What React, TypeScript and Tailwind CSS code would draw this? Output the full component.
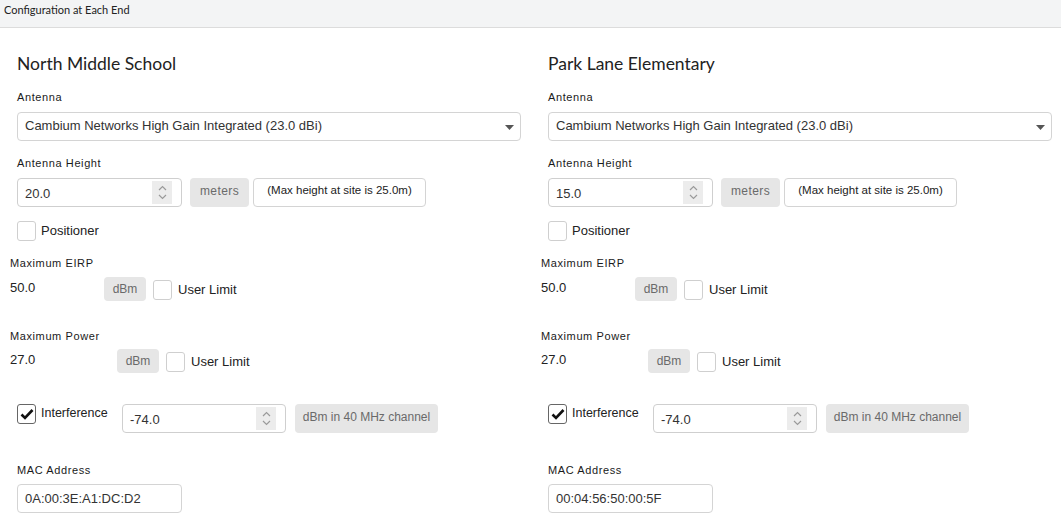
import React from "react";

const sans = { fontFamily: '"Liberation Sans", Arial, sans-serif' };
const lato = { fontFamily: 'Lato, "Liberation Sans", sans-serif' };

function Spinner() {
  return (
    <div className="absolute right-[9px] top-[2px] w-[20px] h-[23px] bg-[#ececec] flex flex-col items-center justify-center gap-[3px]">
      <svg width="9" height="6" viewBox="0 0 9 6">
        <path d="M1 5 L4.5 1.5 L8 5" fill="none" stroke="#9a9a9a" strokeWidth="1.2" />
      </svg>
      <svg width="9" height="6" viewBox="0 0 9 6">
        <path d="M1 1 L4.5 4.5 L8 1" fill="none" stroke="#9a9a9a" strokeWidth="1.2" />
      </svg>
    </div>
  );
}

function NumInput({ value, w }: { value: string; w: string }) {
  return (
    <div className={`relative ${w} h-[29px] border border-[#cfcfcf] rounded-[4px] bg-white flex items-center pl-[7px] text-[13px] text-[#333]`}>
      <span className="mt-[2px]">{value}</span>
      <Spinner />
    </div>
  );
}

function Checkbox({ checked }: { checked?: boolean }) {
  return (
    <div
      className={`w-[19px] h-[20px] rounded-[3px] border bg-white flex items-center justify-center shrink-0 ${
        checked ? "border-[#666]" : "border-[#cfcfcf]"
      }`}
    >
      {checked && (
        <svg width="14" height="12" viewBox="0 0 14 12">
          <path d="M1.5 6.5 L5 10 L12.5 2" fill="none" stroke="#111" strokeWidth="2.6" strokeLinejoin="miter" />
        </svg>
      )}
    </div>
  );
}

function Label({ children, className = "" }: { children: React.ReactNode; className?: string }) {
  return (
    <div className={`text-[11px] leading-[14px] tracking-[0.6px] text-[#1a1a1a] ${className}`}>{children}</div>
  );
}

function Column({ title, height, mac }: { title: string; height: string; mac: string }) {
  return (
    <div className="flex flex-col pl-[10px]" style={sans}>
      <div className="ml-[7px] mt-[26px] text-[17.5px] leading-[20px] text-[#222]" style={lato}>
        {title}
      </div>
      <Label className="ml-[7px] mt-[16px]">Antenna</Label>
      <div className="ml-[7px] mt-[8px] w-[504px] h-[29px] border border-[#d4d4d4] rounded-[4px] flex items-center justify-between pl-[7px] pr-[6px] text-[13px] text-[#333]">
        <span className="mb-[2px]">Cambium Networks High Gain Integrated (23.0 dBi)</span>
        <svg width="9" height="5" viewBox="0 0 9 5" className="mt-[2px]">
          <path d="M0 0 L9 0 L4.5 5 Z" fill="#555" />
        </svg>
      </div>
      <Label className="ml-[7px] mt-[15px]">Antenna Height</Label>
      <div className="ml-[7px] mt-[8px] flex items-start">
        <NumInput value={height} w="w-[165px]" />
        <div className="ml-[8px] w-[59px] h-[29px] rounded-[4px] bg-[#e6e6e6] text-[12px] tracking-[0.4px] text-[#6a6a6a] text-center pt-[4px]">
          meters
        </div>
        <div className="ml-[4px] w-[173px] h-[29px] rounded-[4px] border border-[#d4d4d4] text-[11.5px] text-[#222] flex items-center justify-center pb-[3px]">
          (Max height at site is 25.0m)
        </div>
      </div>
      <div className="ml-[7px] mt-[14px] flex items-center h-[20px]">
        <Checkbox />
        <span className="ml-[5px] text-[13px] text-[#222]">Positioner</span>
      </div>
      <Label className="mt-[15px]">Maximum EIRP</Label>
      <div className="mt-[7px] flex items-center h-[24px]">
        <span className="w-[94px] text-[13px] text-[#222] mb-[2px]">50.0</span>
        <div className="w-[42px] h-[24px] rounded-[4px] bg-[#e6e6e6] text-[12px] text-[#6a6a6a] flex items-center justify-center">
          dBm
        </div>
        <div className="ml-[7px] mt-[2px]">
          <Checkbox />
        </div>
        <span className="ml-[6px] text-[13px] text-[#222] mt-[2px]">User Limit</span>
      </div>
      <Label className="mt-[28px]">Maximum Power</Label>
      <div className="mt-[6px] flex items-center h-[24px]">
        <span className="w-[107px] text-[13px] text-[#222] mb-[2px]">27.0</span>
        <div className="w-[42px] h-[24px] rounded-[4px] bg-[#e6e6e6] text-[12px] text-[#6a6a6a] flex items-center justify-center">
          dBm
        </div>
        <div className="ml-[7px] mt-[2px]">
          <Checkbox />
        </div>
        <span className="ml-[6px] text-[13px] text-[#222] mt-[2px]">User Limit</span>
      </div>
      <div className="ml-[7px] mt-[31px] flex items-start">
        <Checkbox checked />
        <span className="ml-[5px] text-[12.5px] leading-[18px] text-[#222] w-[81px]">Interference</span>
        <NumInput value="-74.0" w="w-[164px]" />
        <div className="ml-[9px] w-[143px] h-[29px] rounded-[4px] bg-[#e6e6e6] text-[12px] text-[#6a6a6a] text-center pt-[4px]">
          dBm in 40 MHz channel
        </div>
      </div>
      <Label className="ml-[7px] mt-[30px]">MAC Address</Label>
      <div className="ml-[7px] mt-[7px] w-[165px] h-[29px] border border-[#d4d4d4] rounded-[4px] flex items-center pl-[7px] text-[13px] text-[#333]">
        <span className="mt-[1px]">{mac}</span>
      </div>
    </div>
  );
}

export default function App() {
  return (
    <div className="w-[1061px] h-[515px] bg-white overflow-hidden">
      <div className="h-[28px] bg-[#f3f4f5] border-b border-[#dcdcdc] flex items-start pl-[4px] pt-[2px]">
        <span className="text-[11px] text-[#222]" style={lato}>
          Configuration at Each End
        </span>
      </div>
      <div className="grid grid-cols-[531px_530px]">
        <Column title="North Middle School" height="20.0" mac="0A:00:3E:A1:DC:D2" />
        <Column title="Park Lane Elementary" height="15.0" mac="00:04:56:50:00:5F" />
      </div>
    </div>
  );
}
